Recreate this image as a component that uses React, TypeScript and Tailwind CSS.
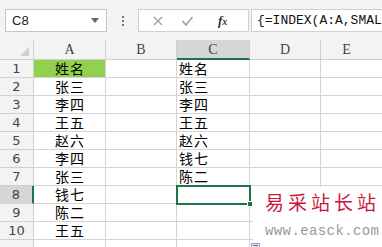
const colA = ["姓名", "张三", "李四", "王五", "赵六", "李四", "张三", "钱七", "陈二", "王五"];
const colC = ["姓名", "张三", "李四", "王五", "赵六", "钱七", "陈二", "", "", ""];

const cjk = { fontFamily: '"Noto Sans CJK SC", sans-serif' };

export default function App() {
  return (
    <div className="relative w-[382px] h-[247px] overflow-hidden bg-white select-none">
      {/* Formula bar */}
      <div className="h-[40px] bg-[#f3f3f3] flex items-start pt-[9px] pl-[5px]">
        <div className="w-[102px] h-[23px] bg-white border border-[#c6c6c6] flex items-center justify-between pl-[6px] pr-[7px]">
          <span className="text-[13px] text-[#222] font-['Liberation_Sans',sans-serif]">C8</span>
          <svg width="8" height="5" viewBox="0 0 8 5">
            <path d="M0 0 L8 0 L4 5 Z" fill="#666" />
          </svg>
        </div>
        <div className="w-[31px] h-[23px] flex flex-col items-center justify-center gap-[2px]">
          <span className="w-[2px] h-[2px] bg-[#777]" />
          <span className="w-[2px] h-[2px] bg-[#777]" />
          <span className="w-[2px] h-[2px] bg-[#777]" />
        </div>
        <div className="w-[111px] h-[23px] bg-white border border-[#d0d0d0] flex items-center">
          <svg width="12" height="12" viewBox="0 0 12 12" className="ml-[13px]">
            <path d="M2 2 L10 10 M10 2 L2 10" stroke="#a0a0a0" strokeWidth="1.4" />
          </svg>
          <svg width="13" height="12" viewBox="0 0 13 12" className="ml-[17px]">
            <path d="M1.5 6 L5 10 L11.5 2" stroke="#a0a0a0" strokeWidth="1.6" fill="none" />
          </svg>
          <span className="ml-[24px] text-[13px] italic font-bold text-[#333] font-['Liberation_Serif',serif] leading-none">
            f<span className="text-[10px]">x</span>
          </span>
        </div>
        <div className="ml-[2px] flex-1 h-[23px] bg-white border border-[#d0d0d0] border-r-0 flex items-center pl-[5px] overflow-hidden">
          <span className="text-[13px] text-[#111] whitespace-nowrap font-['Liberation_Mono',monospace]">
            {"{=INDEX(A:A,SMALL(IF(MATCH(A$1:A$10,A$1:A$10,0)=ROW($1:$10),ROW($1:$10),4^8),ROW(A1)))&\"\"}"}
          </span>
        </div>
      </div>

      {/* Column headers */}
      <div className="flex h-[20px] bg-[#f3f3f3] text-[14px] text-[#444] font-['Liberation_Serif',serif]">
        <div className="w-[34px] border-r border-b border-[#d0d0d0] flex items-end justify-end pr-[4px] pb-[3px]">
          <svg width="9" height="9" viewBox="0 0 9 9">
            <path d="M9 0 L9 9 L0 9 Z" fill="#cfcfcf" />
          </svg>
        </div>
        <div className="w-[72px] border-r border-b border-[#d0d0d0] flex items-center justify-center">A</div>
        <div className="w-[71px] border-r border-b border-[#d0d0d0] flex items-center justify-center">B</div>
        <div className="w-[73px] border-r border-[#d0d0d0] border-b-2 border-b-[#217346] bg-[#d6d6d6] flex items-center justify-center">C</div>
        <div className="w-[71px] border-r border-b border-[#d0d0d0] flex items-center justify-center">D</div>
        <div className="flex-1 border-b border-[#d0d0d0] flex items-center justify-center pr-[10px]">E</div>
      </div>

      {/* Rows */}
      {colA.map((a, i) => {
        const sel = i === 7;
        return (
          <div key={i} className="flex h-[18px] text-[14px] leading-[17px] tracking-[1px] text-black">
            <div
              className={`w-[34px] border-b border-[#d0d0d0] flex items-center justify-center text-[13px] tracking-normal text-[#444] font-['DejaVu_Sans',sans-serif] ${
                sel ? "bg-[#d6d6d6] border-r-2 border-r-[#217346]" : "bg-[#f3f3f3] border-r"
              }`}
            >
              {i + 1}
            </div>
            <div
              className={`w-[72px] border-r border-b border-[#d4d4d4] flex items-center justify-center pl-[1px] ${
                i === 0 ? "bg-[#92d050]" : ""
              }`}
              style={cjk}
            >
              {a}
            </div>
            <div className="w-[71px] border-r border-b border-[#d4d4d4]" />
            <div className="w-[73px] border-r border-b border-[#d4d4d4] flex items-center pl-[2px]" style={cjk}>
              {colC[i]}
            </div>
            <div className="w-[71px] border-r border-b border-[#d4d4d4]" />
            <div className="flex-1 border-b border-[#d4d4d4]" />
          </div>
        );
      })}
      <div className="flex h-[7px]">
        <div className="w-[34px] bg-[#f3f3f3] border-r border-[#d0d0d0]" />
        <div className="w-[72px] border-r border-[#d4d4d4]" />
        <div className="w-[71px] border-r border-[#d4d4d4]" />
        <div className="w-[73px] border-r border-[#d4d4d4]" />
      </div>

      {/* Selected cell C8 */}
      <div className="absolute left-[176px] top-[185px] w-[75px] h-[20px] border-2 border-[#217346]" />
      <div className="absolute left-[247px] top-[201px] w-[6px] h-[6px] bg-[#217346] border border-white" />

      {/* Watermark */}
      <div className="absolute left-[253px] top-[187px] w-[129px] h-[60px] bg-white flex flex-col pl-[12px] pt-[4px]">
        <span className="text-[19px] leading-[22px] tracking-[4px] text-[#c8163c] whitespace-nowrap" style={cjk}>
          易采站长站
        </span>
        <span className="mt-[11px] text-[14px] leading-[14px] tracking-[0.4px] text-[#9a9a9a] whitespace-nowrap font-['Liberation_Mono',monospace]">
          www.easck.com
        </span>
      </div>

      {/* Paste options icon */}
      <div className="absolute left-[251px] top-[243px] w-[9px] h-[6px] bg-[#e8e8f0] border border-[#9aa0b8]">
        <div className="mt-[1px] mx-[1px] h-[1px] bg-[#5a6a9a]" />
      </div>
    </div>
  );
}
